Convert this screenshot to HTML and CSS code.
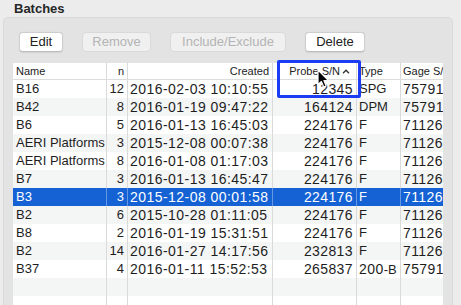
FILE: index.html
```html
<!DOCTYPE html>
<html>
<head>
<meta charset="utf-8">
<link rel="stylesheet" href="styles.css">
</head>
<body>
<div class="page">
  <div class="title">Batches</div>
  <div class="panel">
    <div class="buttons">
      <div class="btn w-edit">Edit</div>
      <div class="btn disabled w-remove">Remove</div>
      <div class="btn disabled w-incl">Include/Exclude</div>
      <div class="btn w-del">Delete</div>
    </div>
    <div class="table">
      <div class="row head">
        <div class="c name">Name</div>
        <div class="c n">n</div>
        <div class="c created">Created</div>
        <div class="c probe">Probe S/N<svg class="chev" width="8" height="5" viewBox="0 0 8 5"><path d="M1 4.2 L4 1.2 L7 4.2" fill="none" stroke="#333" stroke-width="1.4"/></svg></div>
        <div class="c type">Type</div>
        <div class="c gage">Gage S/N</div>
      </div>
      <div class="row">
        <div class="c name">B16</div><div class="c n">12</div><div class="c created num">2016-02-03 10:10:55</div><div class="c probe num">12345</div><div class="c type">SPG</div><div class="c gage num">75791</div>
      </div>
      <div class="row alt">
        <div class="c name">B42</div><div class="c n">8</div><div class="c created num">2016-01-19 09:47:22</div><div class="c probe num">164124</div><div class="c type">DPM</div><div class="c gage num">75791</div>
      </div>
      <div class="row">
        <div class="c name">B6</div><div class="c n">5</div><div class="c created num">2016-01-13 16:45:03</div><div class="c probe num">224176</div><div class="c type">F</div><div class="c gage num">71126</div>
      </div>
      <div class="row alt">
        <div class="c name">AERI Platforms</div><div class="c n">3</div><div class="c created num">2015-12-08 00:07:38</div><div class="c probe num">224176</div><div class="c type">F</div><div class="c gage num">71126</div>
      </div>
      <div class="row">
        <div class="c name">AERI Platforms</div><div class="c n">8</div><div class="c created num">2016-01-08 01:17:03</div><div class="c probe num">224176</div><div class="c type">F</div><div class="c gage num">71126</div>
      </div>
      <div class="row alt">
        <div class="c name">B7</div><div class="c n">3</div><div class="c created num">2016-01-13 16:45:47</div><div class="c probe num">224176</div><div class="c type">F</div><div class="c gage num">71126</div>
      </div>
      <div class="row sel">
        <div class="c name">B3</div><div class="c n">3</div><div class="c created num">2015-12-08 00:01:58</div><div class="c probe num">224176</div><div class="c type">F</div><div class="c gage num">71126</div>
      </div>
      <div class="row alt">
        <div class="c name">B2</div><div class="c n">6</div><div class="c created num">2015-10-28 01:11:05</div><div class="c probe num">224176</div><div class="c type">F</div><div class="c gage num">71126</div>
      </div>
      <div class="row">
        <div class="c name">B8</div><div class="c n">2</div><div class="c created num">2016-01-19 15:31:51</div><div class="c probe num">224176</div><div class="c type">F</div><div class="c gage num">71126</div>
      </div>
      <div class="row alt">
        <div class="c name">B2</div><div class="c n">14</div><div class="c created num">2016-01-27 14:17:56</div><div class="c probe num">232813</div><div class="c type">F</div><div class="c gage num">71126</div>
      </div>
      <div class="row">
        <div class="c name">B37</div><div class="c n">4</div><div class="c created num">2016-01-11 15:52:53</div><div class="c probe num">265837</div><div class="c type"><span class="numw">200</span>-B</div><div class="c gage num">75791</div>
      </div>
      <div class="row alt">
        <div class="c name"></div><div class="c n"></div><div class="c created"></div><div class="c probe"></div><div class="c type"></div><div class="c gage"></div>
      </div>
      <div class="row">
        <div class="c name"></div><div class="c n"></div><div class="c created"></div><div class="c probe"></div><div class="c type"></div><div class="c gage"></div>
      </div>
    </div>
  </div>
  <div class="highlight"></div>
  <svg class="cursor" width="14" height="20" viewBox="0 0 14 20">
    <path d="M1 1 L1 15.5 L4.4 12.4 L6.8 18 L9.2 17 L6.9 11.5 L11.5 11.5 Z" fill="#000" stroke="#fff" stroke-width="1.2" stroke-linejoin="round"/>
  </svg>
</div>
</body>
</html>
```
FILE: styles.css
```css
html, body {
  margin: 0;
  padding: 0;
}
body {
  background: #ececec;
  font-family: "Liberation Sans", Arial, sans-serif;
  color: #1e1e1e;
  overflow: hidden;
  width: 461px;
  height: 305px;
}
.page {
  position: relative;
  width: 461px;
  height: 305px;
  overflow: hidden;
}
.title {
  height: 17px;
  line-height: 18px;
  padding-left: 14px;
  font-size: 13px;
  font-weight: bold;
  color: #262626;
}
.panel {
  box-sizing: border-box;
  margin-left: 3px;
  width: 450px;
  height: 310px;
  background: #e3e3e3;
  border: 1px solid #d9d9d9;
  border-radius: 5px;
  padding: 14px 9px 0 9px;
}
.buttons {
  display: flex;
  gap: 19px;
  padding-left: 6px;
  height: 20px;
  margin-bottom: 11px;
}
.btn {
  box-sizing: border-box;
  height: 20px;
  line-height: 18px;
  font-size: 13px;
  text-align: center;
  background: #ffffff;
  border: 1px solid #cdcdcd;
  border-bottom-color: #bdbdbd;
  border-radius: 4px;
  color: #222;
  box-shadow: 0 0.5px 1px rgba(0,0,0,0.08);
}
.btn.disabled {
  background: #f0f0f0;
  border-color: #d9d9d9;
  color: #b4b4b4;
  box-shadow: none;
}
.w-edit { width: 44px; }
.w-remove { width: 69px; }
.w-incl { width: 116px; }
.w-del { width: 60px; }
.table {
  width: 430px;
  background: #ffffff;
}
.row {
  display: grid;
  grid-template-columns: 94px 21px 145px 84px 44px 42px;
  height: 18px;
  line-height: 18px;
  font-size: 13px;
}
.row.alt {
  background: #f4f5f5;
}
.row.sel {
  background: #1462d4;
  color: #ffffff;
}
.row.head {
  box-sizing: border-box;
  height: 17px;
  line-height: 16px;
  font-size: 11px;
  border-bottom: 1px solid #dcdcdc;
  color: #222;
}
.c {
  box-sizing: border-box;
  border-right: 1px solid #dadada;
  white-space: nowrap;
  overflow: hidden;
}
.row.sel .c {
  border-right-color: rgba(255,255,255,0.35);
}
.c.gage {
  border-right: none;
  padding-left: 2px;
}
.c.name { padding-left: 3px; }
.c.n { text-align: right; padding-right: 3px; }
.c.created { padding-left: 2px; }
.head .c.created { text-align: right; padding-right: 3px; }
.c.probe { text-align: right; padding-right: 3px; }
.head .c.probe { padding-right: 6px; }
.c.type { padding-left: 2px; }
.num, .numw {
  font-size: 14px;
  letter-spacing: 0.45px;
}
.c.probe.num, .c.gage.num {
  letter-spacing: 0.4px;
}
.chev {
  margin-left: 2px;
  vertical-align: 1px;
}
.highlight {
  position: absolute;
  left: 277px;
  top: 60px;
  width: 84px;
  height: 38px;
  box-sizing: border-box;
  border: 3.5px solid #1b3cf2;
  border-radius: 2px;
}
.cursor {
  position: absolute;
  left: 317px;
  top: 69px;
}
```
